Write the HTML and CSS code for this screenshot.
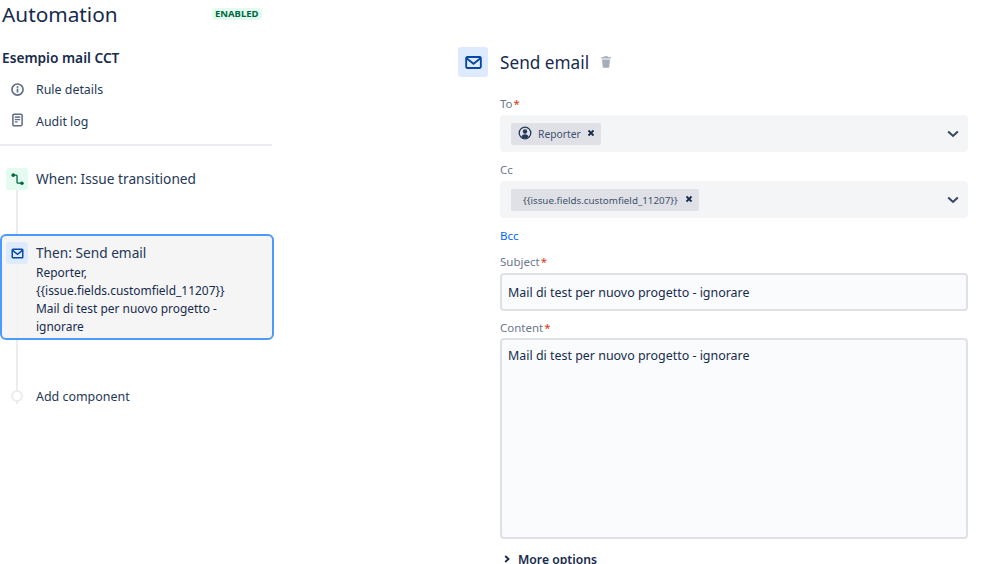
FILE: index.html
```html
<!DOCTYPE html>
<html lang="en">
<head>
<meta charset="utf-8">
<title>Automation</title>
<link rel="stylesheet" href="styles.css">
</head>
<body>
<div class="page">
  <aside class="side">
    <header class="head">
      <h1 class="title">Automation</h1>
      <span class="lozenge">ENABLED</span>
    </header>
    <h2 class="rule-name">Esempio mail CCT</h2>
    <nav class="nav">
      <a class="nav-item">
        <svg class="nav-icon" viewBox="0 0 14 14"><circle cx="7" cy="7" r="5.2" fill="none" stroke="#5e6c84" stroke-width="1.5"/><rect x="6.2" y="6.2" width="1.6" height="3.6" fill="#5e6c84"/><rect x="6.2" y="3.9" width="1.6" height="1.6" fill="#5e6c84"/></svg>
        <span>Rule details</span>
      </a>
      <a class="nav-item">
        <svg class="nav-icon nav-icon-log" viewBox="0 0 14 14"><rect x="2.7" y="1.7" width="8.6" height="10.6" rx="1" fill="none" stroke="#5e6c84" stroke-width="1.4"/><rect x="4.5" y="3.6" width="5" height="1.4" fill="#5e6c84"/><rect x="4.5" y="6" width="5" height="1.2" fill="#5e6c84"/><rect x="4.5" y="8.2" width="2.6" height="1.2" fill="#5e6c84"/></svg>
        <span>Audit log</span>
      </a>
    </nav>
    <div class="timeline">
      <div class="rail"></div>
      <div class="step step-when">
        <span class="badge badge-green">
          <svg class="badge-svg" viewBox="0 0 14 14"><path d="M2.5 2.300H5.500a1 1 0 0 1 1 1V10a1 1 0 0 0 1 1H11.500" fill="none" stroke="#006644" stroke-width="1.4"/><circle cx="2.400" cy="2.300" r="1.900" fill="#006644"/><circle cx="11.800" cy="11" r="1.900" fill="#006644"/></svg>
        </span>
        <span class="step-title">When: Issue transitioned</span>
      </div>
      <div class="step-card">
        <span class="badge badge-blue">
          <svg class="badge-svg" viewBox="0 0 16 14"><rect x="1.5" y="1.8" width="13" height="10.4" rx="1" fill="none" stroke="#0747a6" stroke-width="1.8"/><path d="M2 3.2L8 8L14 3.2" fill="none" stroke="#0747a6" stroke-width="1.7"/></svg>
        </span>
        <div class="card-body">
          <div class="step-title">Then: Send email</div>
          <div class="card-text">Reporter,<br>{{issue.fields.customfield_11207}}<br>Mail di test per nuovo progetto - ignorare</div>
        </div>
      </div>
      <div class="step-add">
        <span class="dot"></span>
        <span class="add-label">Add component</span>
      </div>
    </div>
  </aside>
  <main class="main">
    <div class="main-head">
      <span class="main-badge">
        <svg class="main-svg" viewBox="0 0 18 14"><rect x="1.1" y="1.1" width="15.8" height="11.8" rx="1.2" fill="none" stroke="#0747a6" stroke-width="2"/><path d="M1.8 2.6L9 8.4L16.2 2.6" fill="none" stroke="#0747a6" stroke-width="2"/></svg>
      </span>
      <h2 class="main-title">Send email</h2>
      <svg class="trash" viewBox="0 0 12 13"><path d="M4 1.2h4l.6 1H11v1.4H1V2.2h2.4z" fill="#a5adba"/><path d="M2 4.6h8l-.7 7.2a1 1 0 0 1-1 .9H3.700a1 1 0 0 1-1-.9z" fill="#a5adba"/></svg>
    </div>
    <form class="form">
      <label class="label">To<span class="req">*</span></label>
      <div class="select">
        <span class="tag">
          <svg class="tag-icon" viewBox="0 0 14 14"><circle cx="7" cy="7" r="5.800" fill="none" stroke="#253858" stroke-width="1.300"/><circle cx="7" cy="5.500" r="2.200" fill="#253858"/><path d="M3.300 11c.5-2 2-2.800 3.700-2.800s3.200.8 3.700 2.800a5.500 5.500 0 0 1-7.400 0z" fill="#253858"/></svg>
          <span class="tag-text">Reporter</span>
          <svg class="tag-x" viewBox="0 0 8 8"><path d="M1.500 1.500L6.500 6.500M6.500 1.500L1.500 6.500" stroke="#172b4d" stroke-width="1.800"/></svg>
        </span>
        <svg class="chev" viewBox="0 0 12 8"><path d="M1.200 1.500L6 6L10.800 1.500" fill="none" stroke="#344563" stroke-width="2"/></svg>
      </div>
      <label class="label label-cc">Cc</label>
      <div class="select">
        <span class="tag tag-wide">
          <span class="tag-text">{{issue.fields.customfield_11207}}</span>
          <svg class="tag-x" viewBox="0 0 8 8"><path d="M1.500 1.500L6.500 6.500M6.500 1.500L1.500 6.500" stroke="#172b4d" stroke-width="1.800"/></svg>
        </span>
        <svg class="chev" viewBox="0 0 12 8"><path d="M1.200 1.500L6 6L10.800 1.500" fill="none" stroke="#344563" stroke-width="2"/></svg>
      </div>
      <a class="bcc">Bcc</a>
      <label class="label label-subject">Subject<span class="req">*</span></label>
      <div class="input">Mail di test per nuovo progetto - ignorare</div>
      <label class="label label-content">Content<span class="req">*</span></label>
      <div class="textarea">Mail di test per nuovo progetto - ignorare</div>
      <div class="more">
        <svg class="more-chev" viewBox="0 0 6 8"><path d="M1.200 1L4.500 4L1.200 7" fill="none" stroke="#172b4d" stroke-width="1.800"/></svg>
        <span>More options</span>
      </div>
    </form>
  </main>
</div>
</body>
</html>
```
FILE: styles.css
```css
* { box-sizing: border-box; }
html, body { margin: 0; height: 100%; overflow: hidden; background: #fff; }
body { font-family: "Noto Sans", "Open Sans", sans-serif; color: #172b4d; }
.page { display: flex; width: 999px; height: 564px; overflow: hidden; align-items: flex-start; }

.side { width: 274px; flex: none; margin-right: 184px; }
.head { display: flex; align-items: center; height: 28px; padding-left: 2px; }
.title { margin: 0; font-size: 20.800px; font-weight: 400; line-height: 28px; width: 210px; color: #172b4d; }
.lozenge { background: #e3fcef; color: #006644; font-size: 9.500px; font-weight: 700; line-height: 12px; padding: 0 3px; border-radius: 3px; margin-top: -1px; }
.rule-name { margin: 20px 0 0 2px; font-size: 13.700px; line-height: 20px; font-weight: 600; color: #172b4d; }

.nav { margin-top: 5px; width: 272px; border-bottom: 2px solid #ebecf0; padding-bottom: 7px; }
.nav-item { display: flex; align-items: center; height: 32px; padding-left: 10px; font-size: 12.400px; color: #253858; }
.nav-icon { width: 15px; height: 15px; margin-right: 11px; flex: none; }
.nav-icon-log { height: 16px; margin-top: -2px; }

.timeline { position: relative; }
.rail { position: absolute; left: 16px; top: 20px; width: 2px; height: 216px; background: #ebecf0; }
.step { position: relative; display: flex; align-items: center; height: 22px; margin-top: 22px; padding-left: 6px; }
.badge { width: 22px; height: 22px; border-radius: 3px; display: flex; align-items: center; justify-content: center; flex: none; }
.badge-green { background: #e3fcef; }
.badge-blue { background: #deebff; }
.badge-svg { width: 13px; height: 13px; }
.step-when .step-title { margin-left: 8px; }
.step-title { font-size: 13.700px; line-height: 22px; color: #253858; }
.step-card { position: relative; display: flex; width: 274px; height: 106px; margin-top: 44px; padding: 6px 4px; border: 2px solid #4c9aff; border-radius: 6px; background: rgba(244, 244, 245, 0.9); }
.card-body { margin-left: 8px; }
.card-text { font-size: 11.950px; line-height: 18px; color: #172b4d; width: 206px; }
.step-add { position: relative; display: flex; align-items: center; height: 20px; margin-top: 46px; padding-left: 11px; }
.dot { width: 12px; height: 12px; border-radius: 50%; border: 2px solid #ebecf0; background: #fff; margin-right: 13px; }
.add-label { font-size: 12.450px; color: #253858; }

.main { width: 510px; flex: none; padding-top: 47px; }
.main-head { display: flex; align-items: center; height: 30px; }
.main-badge { width: 30px; height: 30px; border-radius: 3px; background: #deebff; display: flex; align-items: center; justify-content: center; flex: none; }
.main-svg { width: 17px; height: 13px; }
.main-title { margin: 1px 0 0 12px; font-size: 17.200px; font-weight: 400; line-height: 30px; color: #172b4d; }
.trash { width: 12px; height: 13px; margin: -2px 0 0 11px; }

.form { display: flex; flex-direction: column; margin-left: 42px; width: 468px; padding-top: 19px; }
.label { font-size: 11.500px; line-height: 16px; color: #6b778c; height: 16px; }
.req { color: #de350b; margin-left: 1px; }
.select { display: flex; align-items: center; justify-content: space-between; height: 37px; margin-top: 3px; padding: 0 9px 0 11px; background: #f4f5f7; border-radius: 4px; }
.label-cc { margin-top: 10px; }
.tag { display: flex; align-items: center; height: 22px; background: #dfe1e6; border-radius: 2px; padding: 0 6px 0 7px; color: #42526e; font-size: 10.300px; }
.tag-wide { padding: 0 6px 0 12px; font-size: 9.800px; }
.tag-icon { width: 14px; height: 14px; margin-right: 6px; margin-top: -2px; }
.tag-text { margin-top: 1px; }
.tag-x { width: 8px; height: 8px; margin-left: 6px; margin-top: -2px; }
.tag-wide .tag-x { margin-left: 7px; }
.chev { width: 12px; height: 8px; }
.bcc { font-size: 11.500px; line-height: 16px; color: #0065ff; margin-top: 10px; }
.label-subject { margin-top: 10px; }
.input { height: 38px; margin-top: 3px; padding-left: 6px; line-height: 35px; border: 2px solid #dfe1e6; border-radius: 4px; background: #fafbfc; font-size: 12.450px; color: #172b4d; }
.label-content { margin-top: 9px; }
.textarea { height: 201px; margin-top: 2px; padding: 6px 6px; line-height: 20px; border: 2px solid #dfe1e6; border-radius: 4px; background: #fafbfc; font-size: 12.450px; color: #172b4d; }
.more { display: flex; align-items: center; margin-top: 10px; font-size: 12.200px; font-weight: 600; color: #172b4d; height: 20px; padding-left: 4px; }
.more-chev { width: 6px; height: 8px; margin-right: 8px; }
```
